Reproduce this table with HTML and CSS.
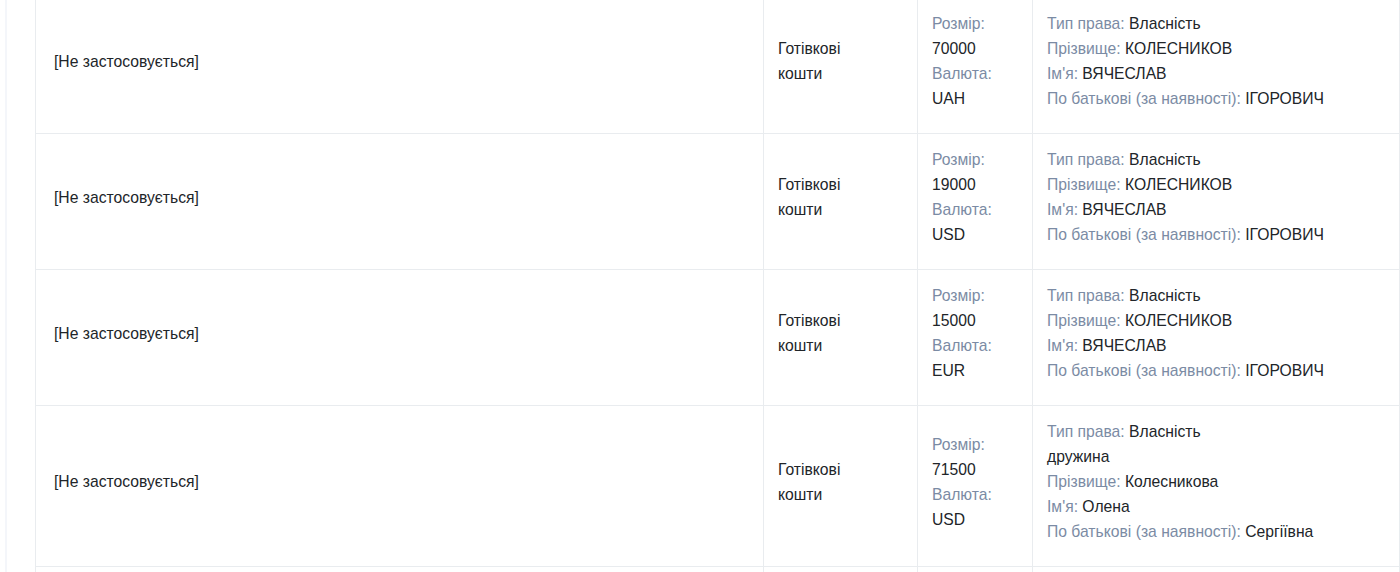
FILE: index.html
```html
<!DOCTYPE html>
<html lang="uk">
<head>
<meta charset="utf-8">
<link rel="stylesheet" href="styles.css">
</head>
<body>
<div class="frame">
  <table class="decl">
    <colgroup>
      <col class="c1"><col class="c2"><col class="c3"><col class="c4">
    </colgroup>
    <tbody>
      <tr>
        <td class="na">[Не застосовується]</td>
        <td class="kind">Готівкові<br>кошти</td>
        <td><div class="lbl">Розмір:</div><div>70000</div><div class="lbl">Валюта:</div><div>UAH</div></td>
        <td>
          <div><span class="lbl">Тип права:</span> Власність</div>
          <div><span class="lbl">Прізвище:</span> КОЛЕСНИКОВ</div>
          <div><span class="lbl">Ім'я:</span> ВЯЧЕСЛАВ</div>
          <div><span class="lbl">По батькові (за наявності):</span> ІГОРОВИЧ</div>
        </td>
      </tr>
      <tr>
        <td class="na">[Не застосовується]</td>
        <td class="kind">Готівкові<br>кошти</td>
        <td><div class="lbl">Розмір:</div><div>19000</div><div class="lbl">Валюта:</div><div>USD</div></td>
        <td>
          <div><span class="lbl">Тип права:</span> Власність</div>
          <div><span class="lbl">Прізвище:</span> КОЛЕСНИКОВ</div>
          <div><span class="lbl">Ім'я:</span> ВЯЧЕСЛАВ</div>
          <div><span class="lbl">По батькові (за наявності):</span> ІГОРОВИЧ</div>
        </td>
      </tr>
      <tr>
        <td class="na">[Не застосовується]</td>
        <td class="kind">Готівкові<br>кошти</td>
        <td><div class="lbl">Розмір:</div><div>15000</div><div class="lbl">Валюта:</div><div>EUR</div></td>
        <td>
          <div><span class="lbl">Тип права:</span> Власність</div>
          <div><span class="lbl">Прізвище:</span> КОЛЕСНИКОВ</div>
          <div><span class="lbl">Ім'я:</span> ВЯЧЕСЛАВ</div>
          <div><span class="lbl">По батькові (за наявності):</span> ІГОРОВИЧ</div>
        </td>
      </tr>
      <tr>
        <td class="na">[Не застосовується]</td>
        <td class="kind">Готівкові<br>кошти</td>
        <td><div class="lbl">Розмір:</div><div>71500</div><div class="lbl">Валюта:</div><div>USD</div></td>
        <td>
          <div><span class="lbl">Тип права:</span> Власність</div>
          <div>дружина</div>
          <div><span class="lbl">Прізвище:</span> Колесникова</div>
          <div><span class="lbl">Ім'я:</span> Олена</div>
          <div><span class="lbl">По батькові (за наявності):</span> Сергіївна</div>
        </td>
      </tr>
      <tr class="next">
        <td></td><td></td><td></td><td></td>
      </tr>
    </tbody>
  </table>
</div>
</body>
</html>
```
FILE: styles.css
```css
html, body {
  margin: 0;
  padding: 0;
  background: #ffffff;
  overflow: hidden;
}
body {
  font-family: "Liberation Sans", Arial, sans-serif;
  font-size: 15.7px;
  line-height: 25px;
  color: #212529;
}
.frame {
  margin-left: 5px;
  margin-top: -3px;
  padding-left: 28px;
  border-left: 2px solid #f4f6fa;
}
.decl {
  border-collapse: collapse;
  table-layout: fixed;
  width: 1364px;
}
.c1 { width: 728px; }
.c2 { width: 154px; }
.c3 { width: 115px; }
.c4 { width: 367px; }
.decl td {
  border: 1px solid #e9ecef;
  padding: 13px 15px 22px 14px;
  vertical-align: middle;
}
.decl td.na {
  padding-left: 18px;
}
.decl .next td {
  height: 40px;
  padding: 0;
}
.lbl {
  color: #7b8ba4;
}
```
